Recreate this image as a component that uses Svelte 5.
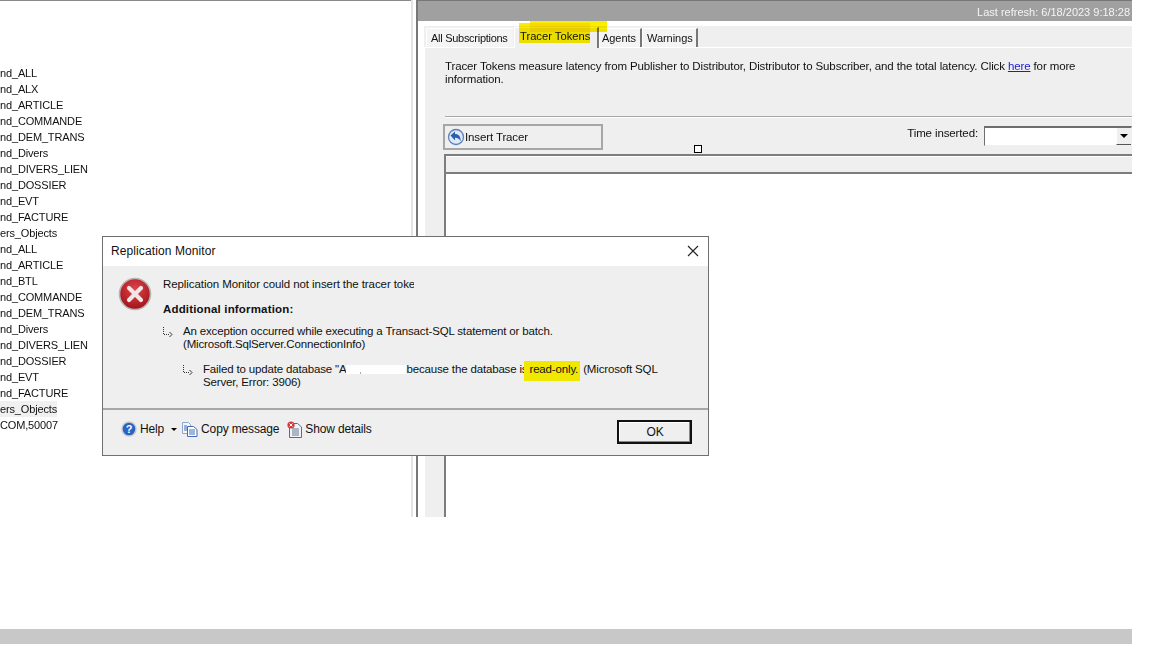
<script>
  const rows = ['nd_ALL','nd_ALX','nd_ARTICLE','nd_COMMANDE','nd_DEM_TRANS','nd_Divers','nd_DIVERS_LIEN','nd_DOSSIER','nd_EVT','nd_FACTURE','ers_Objects','nd_ALL','nd_ARTICLE','nd_BTL','nd_COMMANDE','nd_DEM_TRANS','nd_Divers','nd_DIVERS_LIEN','nd_DOSSIER','nd_EVT','nd_FACTURE','ers_Objects','COM,50007'];
</script>

<div class="page">
  <div class="main">
    <aside class="tree">
      {#each rows as r, i}
        <div class="row"><span class:sel={i === 21}>{r}</span></div>
      {/each}
    </aside>
    <div class="splitter"></div>
    <section class="right">
      <header class="refresh">Last refresh: 6/18/2023 9:18:28</header>
      <div class="panel">
        <div class="tabs">
          <div class="tab t1">All Subscriptions</div>
          <div class="tab active">Tracer Tokens</div>
          <div class="tab t3">Agents</div>
          <div class="tab t4">Warnings</div>
        </div>
        <div class="content">
          <div class="pad">
            <p class="desc">Tracer Tokens measure latency from Publisher to Distributor, Distributor to Subscriber, and the total latency. Click <a href="#here">here</a> for more<br />information.</p>
            <div class="rule"></div>
            <div class="tools">
              <div class="insert">
                <svg width="18" height="18" viewBox="0 0 18 18"><circle cx="9" cy="9" r="7.5" fill="#dfe9f7" stroke="#5f82b8" stroke-width="1.3"/><path d="M3.5 7.500 8 3.500v2.600c3.500 0 5.800 2.200 5.600 7.400-1-2.600-2.600-3.700-5.600-3.700v2.700z" fill="#2c5fb0"/></svg>
                <span>Insert Tracer</span>
              </div>
              <div class="time">
                <span>Time inserted:</span>
                <div class="combo"><div class="drop"><i></i></div></div>
              </div>
            </div>
            <div class="grid"><div class="ghead"></div></div>
          </div>
        </div>
      </div>
    </section>
  </div>
  <div class="foot-bar"></div>

  <div class="hl-tab a"></div>
  <div class="hl-tab b"></div>
  <div class="handle"></div>

  <div class="dialog">
    <div class="title">
      <span>Replication Monitor</span>
      <svg width="12" height="12" viewBox="0 0 12 12"><path d="M1 1l10 10M11 1 1 11" stroke="#222" stroke-width="1.1" fill="none"/></svg>
    </div>
    <div class="body">
      <div class="first">
        <svg class="err" width="34" height="34" viewBox="0 0 34 34">
          <defs><radialGradient id="rg" cx="50%" cy="35%" r="70%"><stop offset="0" stop-color="#e2434b"/><stop offset="1" stop-color="#9c1016"/></radialGradient></defs>
          <circle cx="17" cy="17" r="15.5" fill="url(#rg)" stroke="#b5b5b5" stroke-width="1.6"/>
          <path d="M11 11l12 12M23 11 11 23" stroke="#f2e6e6" stroke-width="4.2" stroke-linecap="round"/>
        </svg>
        <div class="msg">
          <div class="clip">Replication Monitor could not insert the tracer token</div>
          <div class="bold">Additional information:</div>
          <div class="item one">
            <svg class="ar" width="10" height="10" viewBox="0 0 10 10"><path d="M.5 0v7.500H7" stroke="#333" fill="none" stroke-dasharray="1 1"/><path d="M6.500 5 9 7.500 6.500 10" stroke="#333" fill="none"/></svg>
            <p>An exception occurred while executing a Transact-SQL statement or batch.<br />(Microsoft.SqlServer.ConnectionInfo)</p>
          </div>
          <div class="item two">
            <svg class="ar" width="10" height="10" viewBox="0 0 10 10"><path d="M.5 0v7.500H7" stroke="#333" fill="none" stroke-dasharray="1 1"/><path d="M6.500 5 9 7.500 6.500 10" stroke="#333" fill="none"/></svg>
            <p>Failed to update database "A<span class="red"></span>because the database is<mark>read-only.</mark> (Microsoft SQL<br />Server, Error: 3906)</p>
          </div>
        </div>
      </div>
    </div>
    <div class="footer">
      <div class="link">
        <svg width="16" height="16" viewBox="0 0 16 16"><circle cx="8" cy="8" r="7" fill="#2a63c4" stroke="#c9c9c9" stroke-width="1.4"/><text x="8" y="12" font-size="11" font-weight="700" text-anchor="middle" fill="#fff" font-family="Liberation Sans, sans-serif">?</text></svg>
        <span>Help</span>
        <i class="caret"></i>
      </div>
      <div class="link copy">
        <svg width="16" height="15" viewBox="0 0 16 15"><path d="M.5.5h6l2 2v9h-8z" fill="#f4f6fb" stroke="#8fa6cf"/><path d="M5.500 4.500h6l3.500 3v7H5.500z" fill="#fff" stroke="#3f6bb8"/><path d="M7 8h6M7 10h6M7 12h6M2 4h3M2 6h3M2 8h3" stroke="#3f6bb8"/></svg>
        <span>Copy message</span>
      </div>
      <div class="link details">
        <svg width="15" height="17" viewBox="0 0 15 17"><path d="M2.500 2.500h8l4 3.500v10.500h-12z" fill="#f1f3f6" stroke="#5d6b86"/><path d="M5 8h7M5 10h7M5 12h7M5 14h7" stroke="#6b7890"/><circle cx="4" cy="4" r="3.600" fill="#d23a3f"/><path d="M2.500 2.500l3 3M5.500 2.500l-3 3" stroke="#fff"/></svg>
        <span>Show details</span>
      </div>
      <div class="ok"><span>OK</span></div>
    </div>
  </div>
</div>

<style>
  :global(body) { margin: 0; background: #fff; }
  .page {
    position: relative; width: 1152px; height: 648px; overflow: hidden; background: #fff;
    font-family: "Liberation Sans", Arial, sans-serif; font-size: 11.5px; letter-spacing: -.12px; color: #111;
  }
  .main { display: flex; width: 1132px; height: 517px; }
  .tree { width: 411px; flex: none; box-sizing: border-box; border-top: 1px solid #8a8a8a; padding-top: 64px; font-size: 11px; letter-spacing: -.15px; }
  .row { height: 16px; line-height: 16px; white-space: nowrap; }
  .sel { background: #f0f0f0; display: inline-block; }
  .splitter { width: 7px; flex: none; box-sizing: border-box; background: #fff; border-left: 2px solid #e3e3e3; border-right: 2px solid #777; }
  .right { flex: 1; min-width: 0; display: flex; flex-direction: column; }
  .refresh {
    height: 21px; box-sizing: border-box; flex: none; background: #a0a0a0; border-top: 1px solid #777;
    color: #f4f4f4; text-align: right; padding-right: 2px; line-height: 23px; font-size: 11px; letter-spacing: 0;
  }
  .panel { flex: 1; min-height: 0; padding: 5px 0 0 6px; display: flex; flex-direction: column; }
  .tabs { height: 21px; flex: none; background: #efefef; display: flex; align-items: flex-end; padding-left: 2px; border-bottom: 1px solid #fff; }
  .tab {
    height: 19px; line-height: 18px; box-sizing: border-box; background: #f4f4f4; font-size: 11px; letter-spacing: -.05px;
    border-top: 1px solid #fff; border-left: 1px solid #fff; border-right: 2px solid #777; white-space: nowrap;
  }
  .t1 { width: 87px; padding-left: 4px; border-right: 0; letter-spacing: -.28px; }
  .tab.active { width: 85px; height: 21px; line-height: 16px; background: #efefef; padding-left: 5px; margin: 0 0 -1px 1px; font-size: 11.2px; letter-spacing: 0; }
  .t3 { width: 43px; padding-left: 2px; }
  .t4 { width: 56px; padding-left: 4px; margin-left: 0; }
  .content { flex: 1; min-height: 0; background: #efefef; border-left: 1px solid #fff; }
  .pad { padding: 12px 0 0 19px; display: flex; flex-direction: column; height: 100%; box-sizing: border-box; }
  .desc { margin: 0 0 0 1px; line-height: 13px; height: 56px; }
  .desc a { color: #1a1ae0; }
  .rule { height: 1px; background: #a8a8a8; border-bottom: 1px solid #fff; margin-left: 1px; flex: none; }
  .tools { display: flex; justify-content: space-between; padding-top: 6px; height: 30px; flex: none; }
  .insert { width: 160px; height: 26px; box-sizing: border-box; border: 2px solid #a6a6a6; margin-left: -1px; display: flex; align-items: center; padding-left: 2px; }
  .time { display: flex; gap: 6px; align-items: flex-start; }
  .time span { padding-top: 3px; }
  .combo { width: 148px; height: 20px; margin-top: 2px; box-sizing: border-box; background: #fff; border: 1px solid; border-color: #6e6e6e #efefef #efefef #6e6e6e; border-top-width: 2px; display: flex; justify-content: flex-end; }
  .drop { width: 15px; height: 17px; background: #efefef; border-bottom: 1px solid #555; border-left: 1px solid #fff; display: flex; align-items: center; justify-content: center; box-sizing: border-box; }
  .drop i { border: 4px solid transparent; border-top: 4px solid #000; border-bottom: 0; }
  .grid { flex: 1; border-top: 2px solid #7d7d7d; border-left: 2px solid #7d7d7d; background: #fff; }
  .ghead { height: 15px; background: #efefef; border-top: 1px solid #fff; border-bottom: 2px solid #7d7d7d; }
  .foot-bar { height: 15px; margin-top: 112px; width: 1132px; background: #c8c8c8; }

  .hl-tab { position: absolute; background: #fbec00; mix-blend-mode: multiply; }
  .hl-tab.a { left: 519px; top: 23px; width: 71px; height: 20px; }
  .hl-tab.b { left: 530px; top: 21px; width: 77px; height: 11px; }
  .handle { position: absolute; left: 694px; top: 145px; width: 6px; height: 6px; border: 1px solid #000; background: #fff; }

  .dialog { position: absolute; left: 102px; top: 236px; width: 607px; height: 220px; box-sizing: border-box; border: 1px solid #6f6f6f; display: flex; flex-direction: column; background: #efefef; }
  .title { height: 29px; flex: none; background: #fff; display: flex; align-items: center; justify-content: space-between; padding: 0 9px 2px 8px; box-sizing: border-box; font-size: 12px; letter-spacing: .1px; }
  .body { flex: 1; min-height: 0; border-bottom: 2px solid #a8a8a8; padding: 10px 0 0 15px; }
  .first { display: flex; gap: 11px; }
  .err { margin-top: 1px; flex: none; }
  .msg { width: 520px; }
  .clip { width: 251px; overflow: hidden; white-space: nowrap; line-height: 16px; letter-spacing: -.08px; }
  .bold { font-weight: 700; margin-top: 9px; line-height: 16px; letter-spacing: .17px; }
  .item { display: flex; gap: 10px; }
  .item p { margin: 0; line-height: 13px; white-space: nowrap; letter-spacing: -.16px; }
  .ar { flex: none; margin-top: 2px; }
  .one { margin-top: 8px; }
  .two { margin: 12px 0 0 20px; }
  .red { display: inline-block; width: 60px; height: 9px; vertical-align: -1px; background: #fff linear-gradient(90deg, #aaa 0 1px, transparent 1px 5px) 14px 7px / 30px 2px no-repeat; }
  mark { background: #f1e800; color: inherit; padding: 2px 2px 6px 5px; margin-left: -3px; }
  .footer { height: 45px; flex: none; display: flex; align-items: flex-start; padding: 0 16px 0 18px; font-size: 12px; letter-spacing: -.15px; }
  .link { display: flex; align-items: center; gap: 3px; margin-top: 10px; height: 18px; }
  .caret { border: 3px solid transparent; border-top: 3px solid #000; border-bottom: 0; margin-left: 4px; }
  .copy { margin-left: 5px; }
  .details { margin-left: 8px; }
  .ok { margin-left: auto; margin-top: 10px; width: 75px; height: 24px; box-sizing: border-box; border: 2px solid #111; box-shadow: inset -1px -1px 0 #888, inset 1px 1px 0 #fff; display: flex; align-items: center; justify-content: center; padding-left: 1px; }
</style>
